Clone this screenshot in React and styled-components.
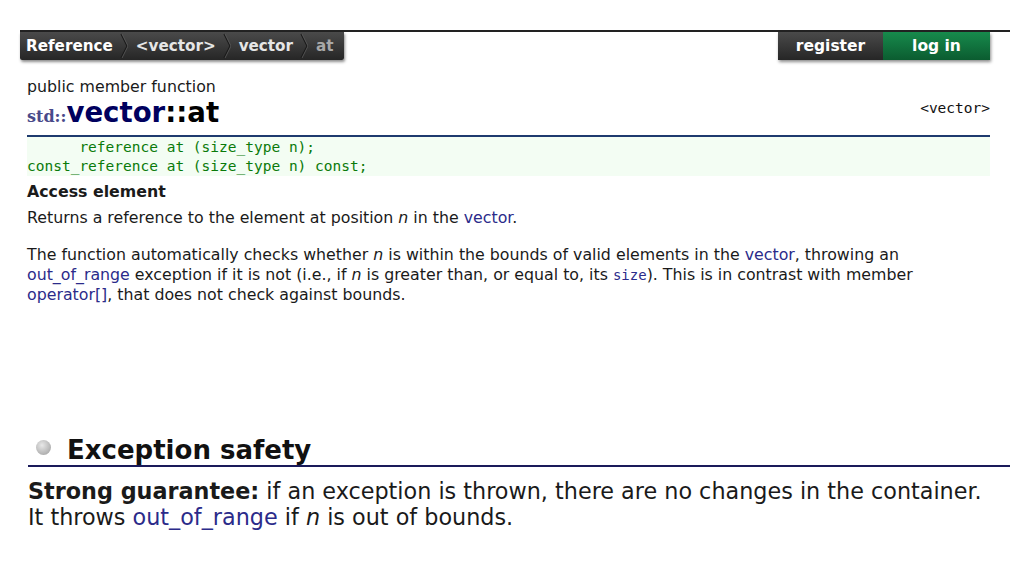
import React from "react";
import styled, { createGlobalStyle } from "styled-components";

const Global = createGlobalStyle`
  html, body {
    margin: 0;
    padding: 0;
    background: #ffffff;
  }
  body {
    font-family: "DejaVu Sans", Verdana, sans-serif;
    color: #000;
  }
`;

const Page = styled.div`
  width: 1024px;
  height: 576px;
  overflow: hidden;
  padding-top: 30px;
  box-sizing: border-box;
`;

const TopBar = styled.div`
  margin: 0 14px 0 20px;
  border-top: 2px solid #222;
  display: flex;
  justify-content: space-between;
  align-items: flex-start;
`;

const Crumbs = styled.div`
  display: flex;
  align-items: center;
  height: 28px;
  padding: 0 10px 0 6px;
  background: linear-gradient(#4a4a4a, #262626);
  box-shadow: 1px 2px 3px rgba(0, 0, 0, 0.45);
  border-radius: 0 0 2px 2px;
`;

const Crumb = styled.span`
  font-weight: bold;
  font-size: 15.2px;
  color: ${(p) => (p.$current ? "#a8a8a8" : p.$first ? "#ffffff" : "#e6e6e6")};
  padding: 0 ${(p) => (p.$pad !== undefined ? p.$pad : 7)}px 0 0;
`;

const Chevron = styled.svg`
  width: 8px;
  height: 28px;
  margin-right: 8px;
  flex: none;
`;

const User = styled.div`
  display: flex;
  margin-right: 20px;
  box-shadow: 1px 2px 3px rgba(0, 0, 0, 0.45);
`;

const UserBtn = styled.div`
  height: 28px;
  width: ${(p) => p.$w}px;
  display: flex;
  align-items: center;
  justify-content: center;
  font-weight: bold;
  font-size: 15.5px;
  color: #fff;
  background: ${(p) =>
    p.$green
      ? "linear-gradient(#178a4c, #0b5c30)"
      : "linear-gradient(#4a4a4a, #262626)"};
`;

const Content = styled.div`
  padding: 17px 34px 0 27px;
`;

const Kind = styled.div`
  font-size: 15.8px;
  color: #1a1a1a;
  line-height: 20px;
`;

const TitleRow = styled.div`
  display: flex;
  justify-content: space-between;
  align-items: flex-end;
  border-bottom: 2px solid #1e3a6e;
  padding-bottom: 2px;
`;

const Title = styled.h1`
  margin: 0;
  font-size: 27.6px;
  line-height: 32px;
  font-weight: bold;
  color: #000;
`;

const Ns = styled.span`
  font-family: "DejaVu Serif", "Liberation Serif", serif;
  font-size: 16px;
  color: #4a4a8a;
  font-weight: bold;
`;

const Cls = styled.span`
  color: #00005e;
`;

const Header = styled.span`
  font-family: "DejaVu Sans Mono", monospace;
  font-size: 14.5px;
  color: #111;
  margin-bottom: 17px;
`;

const Proto = styled.pre`
  margin: 0;
  background: #f3fdf3;
  color: #0a7a0a;
  font-family: "DejaVu Sans Mono", monospace;
  font-size: 14.5px;
  line-height: 19px;
  padding: 1px 0 0 0;
  height: 39px;
  box-sizing: border-box;
`;

const Section = styled.div`
  font-size: 15.8px;
  font-weight: bold;
  color: #1a1a1a;
  margin-top: 6px;
  line-height: 20px;
`;

const P = styled.p`
  font-size: 15.8px;
  line-height: 20px;
  color: #1a1a1a;
  margin: ${(p) => p.$m || "6px 0 0 0"};
`;

const A = styled.span`
  color: #2b2b8a;
`;

const Code = styled.code`
  font-family: "DejaVu Sans Mono", monospace;
  font-size: 14px;
  color: #2b2b8a;
`;

const Safety = styled.div`
  margin: 131px 14px 0 28px;
`;

const SafetyHead = styled.div`
  display: flex;
  align-items: center;
  border-bottom: 2px solid #1a1a5a;
`;

const Bullet = styled.span`
  width: 15px;
  height: 15px;
  border-radius: 50%;
  background: radial-gradient(circle at 40% 35%, #e8e8e8, #9a9a9a);
  margin: 0 16px 6px 8px;
  flex: none;
`;

const SafetyTitle = styled.h2`
  margin: 0;
  font-size: 26px;
  line-height: 29px;
  font-weight: bold;
  color: #111;
`;

const Big = styled.p`
  margin: 0;
  font-size: 22.3px;
  line-height: 26px;
  color: #1a1a1a;
  padding-top: 11px;
`;

function Sep() {
  return (
    <Chevron viewBox="0 0 8 28">
      <path d="M1 2 L7 14 L1 26" fill="none" stroke="#191919" strokeWidth="1.2" />
      <path d="M2 2 L8 14 L2 26" fill="none" stroke="#5c5c5c" strokeWidth="0.8" />
    </Chevron>
  );
}

export default function App() {
  return (
    <Page>
      <Global />
      <TopBar>
        <Crumbs>
          <Crumb $first>Reference</Crumb>
          <Sep />
          <Crumb>&lt;vector&gt;</Crumb>
          <Sep />
          <Crumb>vector</Crumb>
          <Sep />
          <Crumb $current $pad={0}>at</Crumb>
        </Crumbs>
        <User>
          <UserBtn $w={105}>register</UserBtn>
          <UserBtn $w={107} $green>log in</UserBtn>
        </User>
      </TopBar>
      <Content>
        <Kind>public member function</Kind>
        <TitleRow>
          <Title>
            <Ns>std::</Ns>
            <Cls>vector</Cls>::at
          </Title>
          <Header>&lt;vector&gt;</Header>
        </TitleRow>
        <Proto>{"      reference at (size_type n);\nconst_reference at (size_type n) const;"}</Proto>
        <Section>Access element</Section>
        <P>
          Returns a reference to the element at position <i>n</i> in the <A>vector</A>.
        </P>
        <P $m="17px 0 0 0">
          The function automatically checks whether <i>n</i> is within the bounds of valid
          elements in the <A>vector</A>, throwing an
          <br />
          <A>out_of_range</A> exception if it is not (i.e., if <i>n</i> is greater than, or
          equal to, its <Code>size</Code>). This is in contrast with member
          <br />
          <A>operator[]</A>, that does not check against bounds.
        </P>
      </Content>
      <Safety>
        <SafetyHead>
          <Bullet />
          <SafetyTitle>Exception safety</SafetyTitle>
        </SafetyHead>
        <Big>
          <b>Strong guarantee:</b> if an exception is thrown, there are no changes in the
          container.
          <br />
          It throws <A>out_of_range</A> if <i>n</i> is out of bounds.
        </Big>
      </Safety>
    </Page>
  );
}
